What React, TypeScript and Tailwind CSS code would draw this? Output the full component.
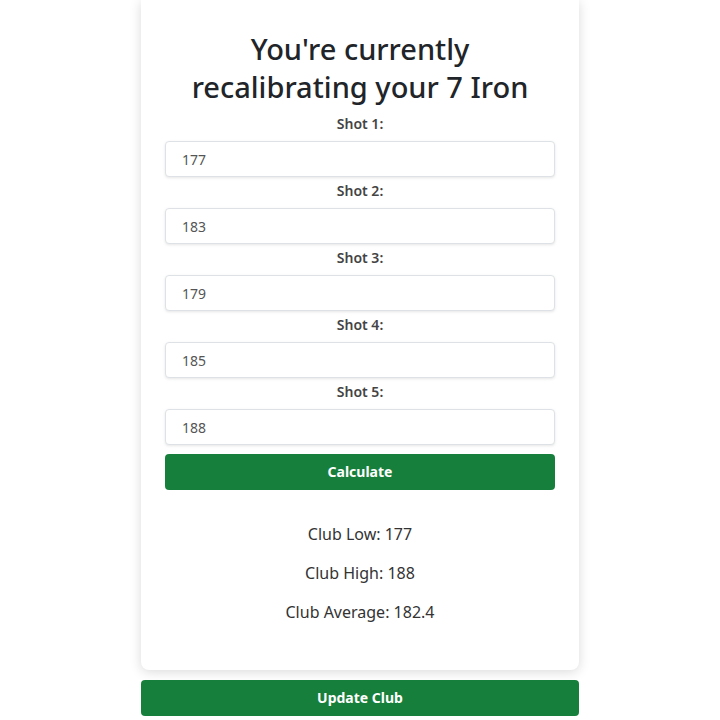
const shots = [177, 183, 179, 185, 188];

export default function App() {
  const low = Math.min(...shots);
  const high = Math.max(...shots);
  const avg = shots.reduce((a, b) => a + b, 0) / shots.length;

  return (
    <div className="min-h-screen bg-white" style={{ fontFamily: '"Noto Sans", "Open Sans", sans-serif' }}>
      <div className="w-[438px] mx-auto">
        <div className="bg-white rounded-b-lg shadow-[0_2px_12px_rgba(0,0,0,0.15)] px-6 pt-[30px] pb-[46px]">
          <h1 className="text-center text-[29px] leading-[38px] font-medium text-[#212529] px-4">
            You're currently recalibrating your 7 Iron
          </h1>
          <div className="mt-2">
            {shots.map((s, i) => (
              <div key={i}>
                <label className="block text-center text-sm font-semibold leading-5 text-[#444] mb-[7px] mt-1">
                  Shot {i + 1}:
                </label>
                <input
                  defaultValue={s}
                  className="w-full h-9 px-4 text-sm text-[#555] border border-[#dee2e6] rounded bg-white shadow-[0_1px_3px_rgba(0,0,0,0.1)] outline-none"
                />
              </div>
            ))}
          </div>
          <button className="w-full h-9 mt-[9px] rounded bg-[#177f3c] text-white text-sm font-bold">
            Calculate
          </button>
          <div className="mt-[32px] text-center text-base leading-6 text-[#333] flex flex-col gap-[15px]">
            <p>Club Low: {low}</p>
            <p>Club High: {high}</p>
            <p>Club Average: {avg.toFixed(1)}</p>
          </div>
        </div>
        <button className="w-full h-9 mt-[10px] rounded bg-[#177f3c] text-white text-sm font-bold">
          Update Club
        </button>
      </div>
    </div>
  );
}
